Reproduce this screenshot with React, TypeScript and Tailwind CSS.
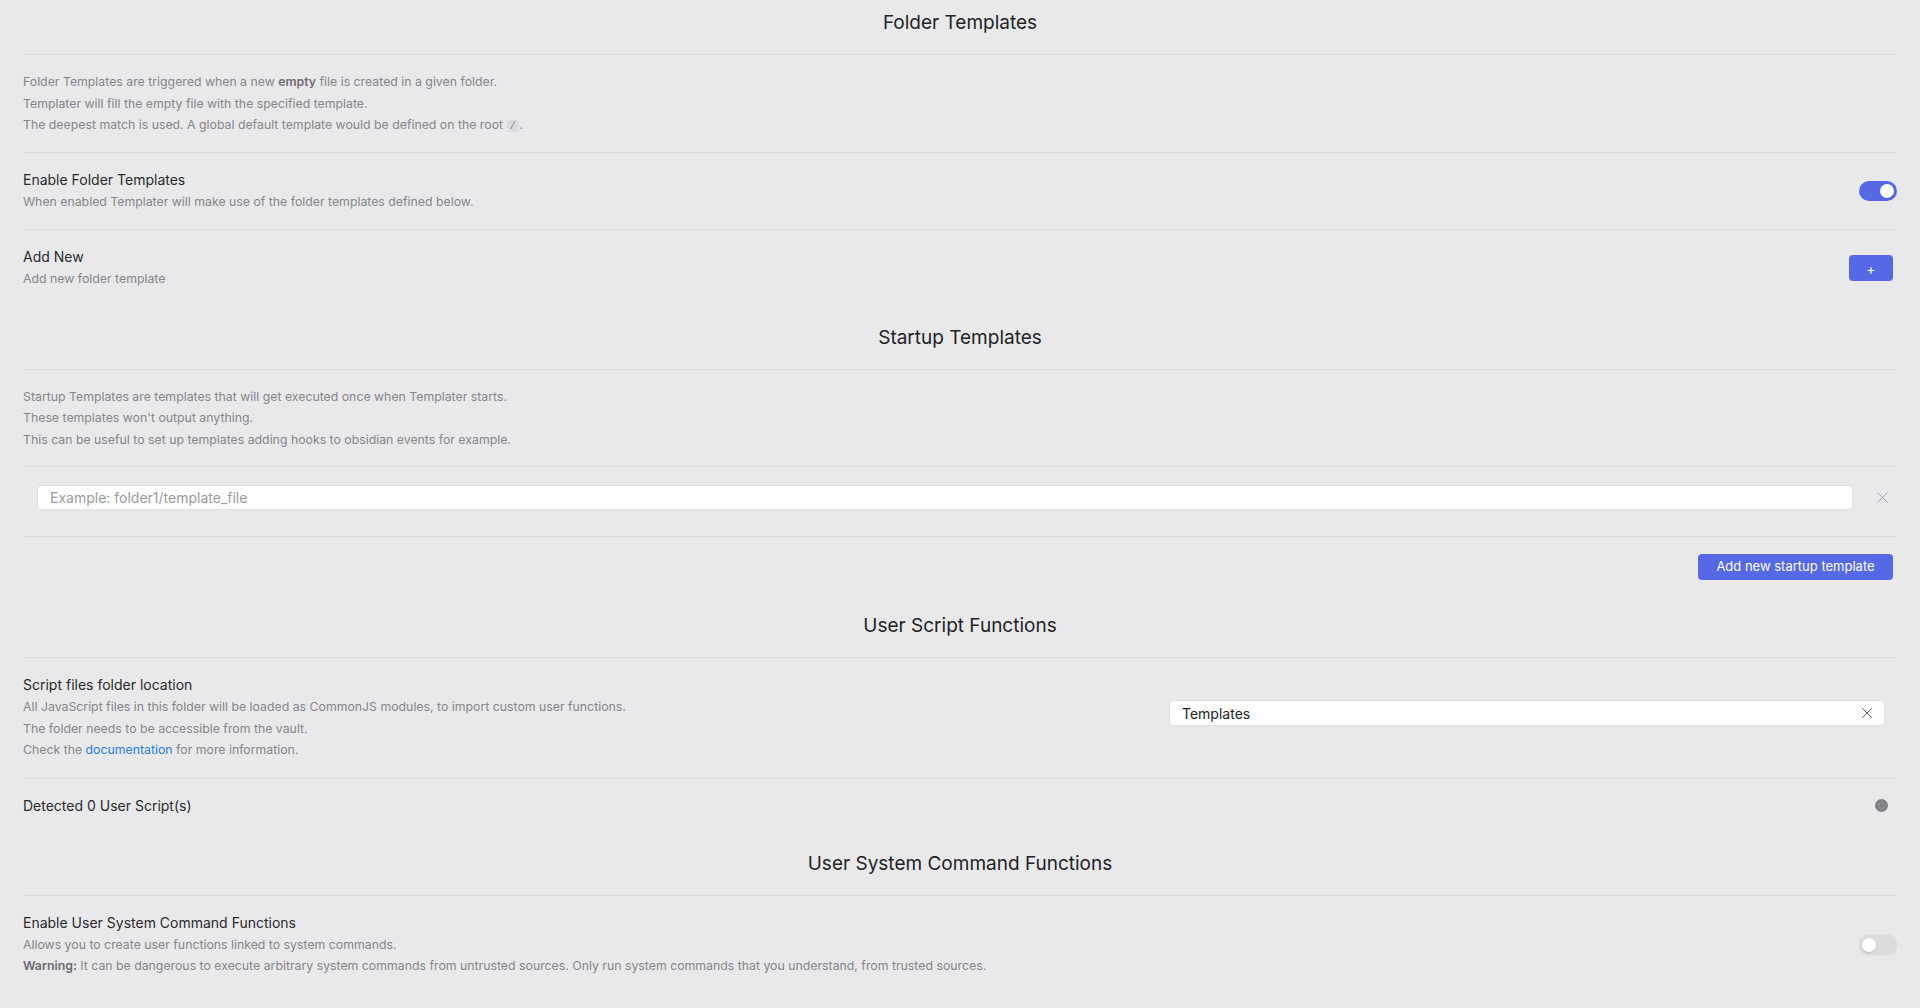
import { X } from 'lucide-react'

function Heading({ title, first = false }: { title: string; first?: boolean }) {
  return (
    <div
      className={
        'text-center text-[19px] leading-[24px] text-[#222226] ' +
        (first ? 'pt-[11px] pb-[19px]' : 'pt-[19px] pb-[19px]')
      }
    >
      {title}
    </div>
  )
}

function Toggle({ on }: { on: boolean }) {
  return (
    <div
      className={
        'flex h-[20px] w-[38px] items-center rounded-full px-[3px] ' +
        (on ? 'justify-end bg-[#5569e6]' : 'justify-start bg-[#dcdcde] shadow-[0_0_0_1px_#e2e2e4]')
      }
    >
      <div className="h-[14px] w-[14px] rounded-full bg-white shadow-[0_1px_2px_rgba(0,0,0,0.15)]" />
    </div>
  )
}

function Desc({ children }: { children: React.ReactNode }) {
  return <div className="text-[12.3px] leading-[21.5px] text-[#85858b]">{children}</div>
}

function Item({
  name,
  children,
  control,
}: {
  name: string
  children?: React.ReactNode
  control?: React.ReactNode
}) {
  return (
    <div className="flex items-center border-t border-[#dcdcdf] py-[17px]">
      <div className="flex-1">
        <div className="text-[14px] leading-[20px] text-[#2a2a2e]">{name}</div>
        {children && <div className="mt-[1px]">{children}</div>}
      </div>
      {control}
    </div>
  )
}

export default function App() {
  return (
    <div className="min-h-screen bg-[#e9e9eb] px-[23px] font-['Inter',sans-serif]">
      <Heading title="Folder Templates" first />
      <div className="border-t border-[#dcdcdf] py-[16px]">
        <Desc>
          Folder Templates are triggered when a new <b className="font-semibold text-[#6c6c72]">empty</b> file is
          created in a given folder.
        </Desc>
        <Desc>Templater will fill the empty file with the specified template.</Desc>
        <Desc>
          The deepest match is used. A global default template would be defined on the root{' '}
          <code className="rounded-[3px] bg-[#dcdcdf] px-[3px] font-['Liberation_Mono',monospace] text-[11px] leading-none">
            /
          </code>
          .
        </Desc>
      </div>

      <Item name="Enable Folder Templates" control={<Toggle on />}>
        <Desc>When enabled Templater will make use of the folder templates defined below.</Desc>
      </Item>

      <div className="flex items-center border-t border-[#dcdcdf] py-[17px]">
        <div className="flex-1">
          <div className="text-[14px] leading-[20px] text-[#2a2a2e]">Add New</div>
          <div className="mt-[1px]">
            <Desc>Add new folder template</Desc>
          </div>
        </div>
        <button className="mr-[4px] flex h-[26px] w-[44px] items-center justify-center rounded-[4px] bg-[#5569e6] text-[14px] text-white">
          +
        </button>
      </div>

      <Heading title="Startup Templates" />
      <div className="border-t border-[#dcdcdf] py-[16px]">
        <Desc>Startup Templates are templates that will get executed once when Templater starts.</Desc>
        <Desc>These templates won't output anything.</Desc>
        <Desc>This can be useful to set up templates adding hooks to obsidian events for example.</Desc>
      </div>

      <div className="flex items-center border-t border-[#dcdcdf] pt-[18px] pb-[26px]">
        <div className="ml-[14px] flex h-[25px] flex-1 items-center rounded-[4px] border border-[#e0e0e3] bg-white px-[12px] text-[14px] text-[#9a9aa0]">
          Example: folder1/template_file
        </div>
        <div className="ml-[14px] flex h-[25px] w-[30px] items-center justify-center text-[#9a9aa0]">
          <X size={19} strokeWidth={1.1} />
        </div>
      </div>

      <div className="flex justify-end border-t border-[#dcdcdf] pt-[17px] pb-[15px]">
        <button className="mr-[4px] h-[26px] w-[195px] rounded-[4px] bg-[#5569e6] text-[13px] text-white">
          Add new startup template
        </button>
      </div>

      <Heading title="User Script Functions" />
      <Item
        name="Script files folder location"
        control={
          <div className="mr-[12px] mb-[9px] flex h-[26px] w-[716px] items-center rounded-[4px] border border-[#e0e0e3] bg-white pl-[12px] pr-[8px] text-[14px] text-[#222226]">
            <span className="flex-1">Templates</span>
            <X size={18} strokeWidth={1.3} className="text-[#5a5a60]" />
          </div>
        }
      >
        <Desc>All JavaScript files in this folder will be loaded as CommonJS modules, to import custom user functions.</Desc>
        <Desc>The folder needs to be accessible from the vault.</Desc>
        <Desc>
          Check the <a className="text-[#1f7fd6]">documentation</a> for more information.
        </Desc>
      </Item>

      <Item
        name="Detected 0 User Script(s)"
        control={
          <div className="mr-[9px] flex h-[13px] w-[13px] items-center justify-center rounded-full bg-[#808086]">
            <div className="h-[7px] w-[7px] rounded-full border border-[#9a9aa0]" />
          </div>
        }
      />

      <Heading title="User System Command Functions" />
      <Item name="Enable User System Command Functions" control={<Toggle on={false} />}>
        <Desc>Allows you to create user functions linked to system commands.</Desc>
        <Desc>
          <b className="font-semibold text-[#6c6c72]">Warning:</b> It can be dangerous to execute arbitrary system
          commands from untrusted sources. Only run system commands that you understand, from trusted sources.
        </Desc>
      </Item>
    </div>
  )
}
